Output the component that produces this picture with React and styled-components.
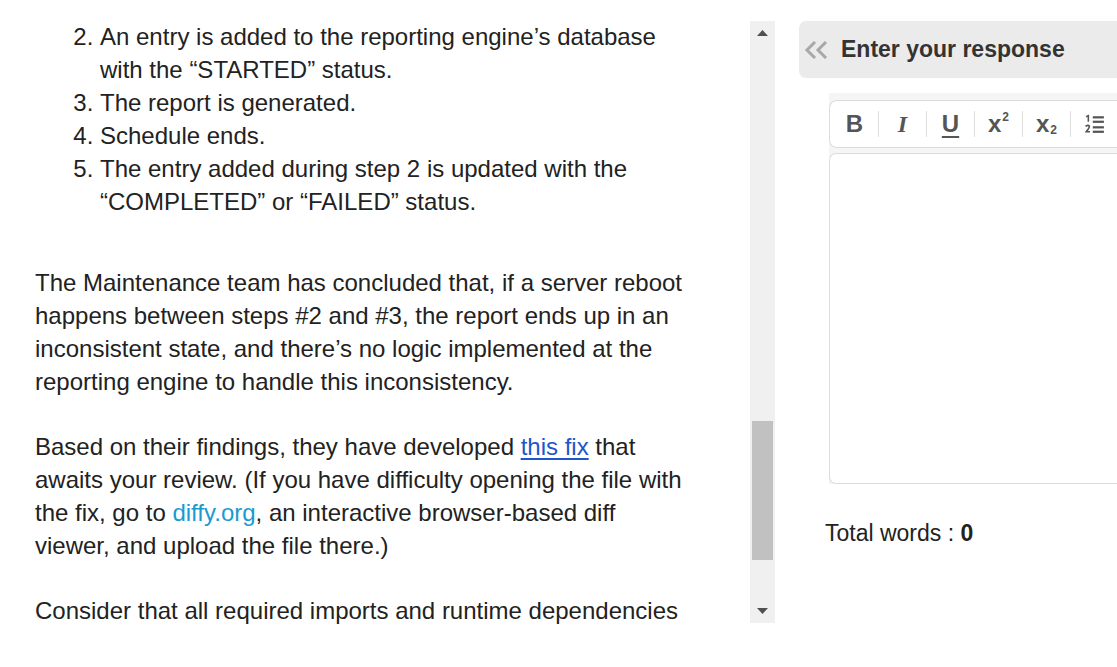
import React from "react";
import styled, { createGlobalStyle } from "styled-components";

const GlobalStyle = createGlobalStyle`
    html, body {
        margin: 0;
        padding: 0;
        background: #fff;
    }
    body {
        font-family: "Liberation Sans", Arial, sans-serif;
        color: #222;
    }
`;

const Page = styled.div`
    display: flex;
    width: 1117px;
    height: 667px;
    overflow: hidden;
`;

const ReadingPane = styled.div`
    width: 750px;
    height: 624px;
    flex-shrink: 0;
    padding: 20px 0 0 35px;
    box-sizing: border-box;
    overflow: hidden;
`;

const Prose = styled.div`
    width: 652px;
    font-size: 24px;
    line-height: 33px;
    color: #222;
`;

const Steps = styled.ol`
    margin: 0 0 48px;
    padding-left: 65px;
`;

const Paragraph = styled.p`
    margin: 0 0 32px;
`;

const DocLink = styled.a`
    color: #1d56c9;
    text-decoration: underline;
    text-underline-offset: 3px;
`;

const PlainLink = styled.a`
    color: #1b9ad1;
    text-decoration: none;
`;

const Scrollbar = styled.div`
    width: 25px;
    flex-shrink: 0;
    margin-top: 21px;
    height: 602px;
    background: #f0f0f0;
    display: flex;
    flex-direction: column;
    align-items: center;
`;

const ArrowButton = styled.div`
    height: 24px;
    width: 100%;
    display: flex;
    align-items: center;
    justify-content: center;
`;

const Track = styled.div`
    flex: 1;
    width: 100%;
    padding: 0 2px;
    box-sizing: border-box;
`;

const Thumb = styled.div`
    margin-top: 376px;
    height: 139px;
    background: #c1c1c1;
`;

const ResponsePane = styled.div`
    flex: 1;
    margin-left: 24px;
    padding-top: 21px;
    min-width: 0;
`;

const ResponseHeader = styled.div`
    height: 57px;
    background: #ebebeb;
    border-radius: 7px 0 0 7px;
    display: flex;
    align-items: center;
    gap: 12px;
    padding-left: 5px;
    width: 340px;
`;

const HeaderTitle = styled.span`
    font-size: 23px;
    font-weight: bold;
    color: #333;
    white-space: nowrap;
`;

const EditorFrame = styled.div`
    margin: 15px 0 0 30px;
    width: 320px;
    background: #f5f5f5;
    padding-top: 7px;
`;

const Toolbar = styled.div`
    height: 46px;
    background: #fff;
    border: 1px solid #dcdcdc;
    border-right: none;
    border-radius: 8px 0 0 8px;
    display: flex;
    align-items: center;
    padding-left: 1px;
`;

const ToolButton = styled.div`
    width: 47px;
    height: 100%;
    display: flex;
    align-items: center;
    justify-content: center;
    color: #555;
    font-size: 24px;
    font-weight: bold;
    font-family: ${(p) => (p.$serif ? '"Liberation Serif", serif' : '"Liberation Sans", Arial, sans-serif')};
    font-style: ${(p) => (p.$italic ? "italic" : "normal")};
    text-decoration: ${(p) => (p.$underline ? "underline" : "none")};
    text-underline-offset: 4px;
    text-decoration-thickness: 2px;
`;

const Divider = styled.div`
    width: 1px;
    height: 26px;
    background: #dedede;
`;

const Script = styled.span`
    font-size: 12px;
    position: relative;
    top: ${(p) => (p.$sub ? "6px" : "-7px")};
    margin-left: 1px;
`;

const EditArea = styled.div`
    height: 329px;
    margin-top: 5px;
    background: #fff;
    border: 1px solid #dcdcdc;
    border-right: none;
    border-radius: 7px 0 0 7px;
`;

const WordCount = styled.div`
    margin: 36px 0 0 26px;
    font-size: 23px;
    color: #222;
`;

const Triangle = ({ down }) => (
    <svg width="11" height="6" viewBox="0 0 11 6">
        <polygon points={down ? "0,0 11,0 5.5,6" : "0,6 11,6 5.5,0"} fill="#505050" />
    </svg>
);

const Collapse = () => (
    <svg width="25" height="18" viewBox="0 0 25 18">
        <polyline points="11,1 3,9 11,17" fill="none" stroke="#a8a8a8" strokeWidth="3" />
        <polyline points="22,1 14,9 22,17" fill="none" stroke="#a8a8a8" strokeWidth="3" />
    </svg>
);

const OrderedList = () => (
    <svg width="20" height="20" viewBox="0 0 18 18">
        <path d="M1 2.5 L3 1.5 V7" fill="none" stroke="#555" strokeWidth="1.4" />
        <path d="M0.5 11 Q3 9.5 4 11 Q4 12.5 1 16 H4.5" fill="none" stroke="#555" strokeWidth="1.4" />
        <rect x="7" y="2" width="10" height="2" fill="#555" />
        <rect x="7" y="6" width="10" height="2" fill="#555" />
        <rect x="7" y="11" width="10" height="2" fill="#555" />
        <rect x="7" y="15" width="10" height="2" fill="#555" />
    </svg>
);

export default function App() {
    return (
        <>
            <GlobalStyle />
            <Page>
                <ReadingPane>
                    <Prose>
                        <Steps start={2}>
                            <li>An entry is added to the reporting engine’s database with the “STARTED” status.</li>
                            <li>The report is generated.</li>
                            <li>Schedule ends.</li>
                            <li>The entry added during step 2 is updated with the “COMPLETED” or “FAILED” status.</li>
                        </Steps>
                        <Paragraph>
                            The Maintenance team has concluded that, if a server reboot happens between steps #2 and
                            #3, the report ends up in an inconsistent state, and there’s no logic implemented at the
                            reporting engine to handle this inconsistency.
                        </Paragraph>
                        <Paragraph>
                            Based on their findings, they have developed <DocLink href="#">this fix</DocLink> that
                            awaits your review. (If you have difficulty opening the file with the fix, go to{" "}
                            <PlainLink href="#">diffy.org</PlainLink>, an interactive browser-based diff viewer, and
                            upload the file there.)
                        </Paragraph>
                        <Paragraph>Consider that all required imports and runtime dependencies</Paragraph>
                    </Prose>
                </ReadingPane>

                <Scrollbar>
                    <ArrowButton>
                        <Triangle />
                    </ArrowButton>
                    <Track>
                        <Thumb />
                    </Track>
                    <ArrowButton>
                        <Triangle down />
                    </ArrowButton>
                </Scrollbar>

                <ResponsePane>
                    <ResponseHeader>
                        <Collapse />
                        <HeaderTitle>Enter your response</HeaderTitle>
                    </ResponseHeader>
                    <EditorFrame>
                        <Toolbar>
                            <ToolButton>B</ToolButton>
                            <Divider />
                            <ToolButton $serif $italic>I</ToolButton>
                            <Divider />
                            <ToolButton $underline>U</ToolButton>
                            <Divider />
                            <ToolButton>
                                x<Script>2</Script>
                            </ToolButton>
                            <Divider />
                            <ToolButton>
                                x<Script $sub>2</Script>
                            </ToolButton>
                            <Divider />
                            <ToolButton>
                                <OrderedList />
                            </ToolButton>
                            <Divider />
                        </Toolbar>
                        <EditArea />
                    </EditorFrame>
                    <WordCount>
                        Total words : <b>0</b>
                    </WordCount>
                </ResponsePane>
            </Page>
        </>
    );
}
